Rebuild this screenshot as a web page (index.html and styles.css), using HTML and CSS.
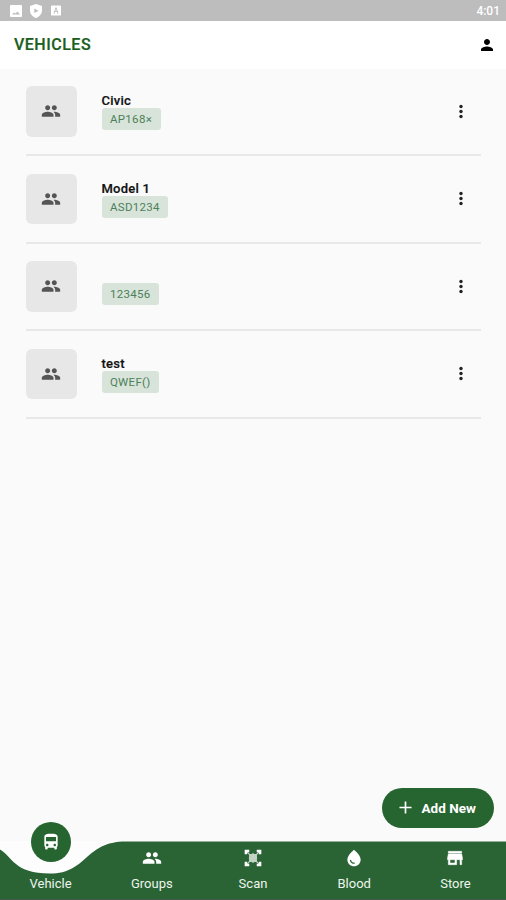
FILE: index.html
```html
<!DOCTYPE html>
<html lang="en">

<head>
    <meta charset="UTF-8">
    <meta name="viewport" content="width=device-width, initial-scale=1.0">
    <title>Vehicles</title>

    <link rel="stylesheet" href="styles.css">
</head>

<body>
    <!-- Shared icons -->
    <svg class="sprite">
        <symbol id="people" viewBox="0 0 24 24">
            <path d="M16 11c1.66 0 2.99-1.34 2.99-3S17.66 5 16 5s-3 1.34-3 3 1.34 3 3 3zm-8 0c1.66 0 2.99-1.34 2.99-3S9.66 5 8 5 5 6.34 5 8s1.34 3 3 3zm0 2c-2.33 0-7 1.17-7 3.5V19h14v-2.5c0-2.33-4.67-3.5-7-3.5zm8 0c-.29 0-.62.02-.97.05 1.16.84 1.97 1.97 1.97 3.45V19h6v-2.5c0-2.33-4.67-3.5-7-3.5z" />
        </symbol>
        <symbol id="more" viewBox="0 0 6 16">
            <circle cx="3" cy="2.5" r="1.700" />
            <circle cx="3" cy="7.5" r="1.700" />
            <circle cx="3" cy="12.5" r="1.700" />
        </symbol>
    </svg>

    <div class="status-bar">
        <svg class="status-icon" viewBox="0 0 12 12">
            <path fill-rule="evenodd" d="M1 0h10a1 1 0 0 1 1 1v10a1 1 0 0 1-1 1H1a1 1 0 0 1-1-1V1a1 1 0 0 1 1-1zM2 9.500h8L7.500 6.500 5.500 8.500 4 7.500z" />
        </svg>
        <svg class="status-icon shield" viewBox="0 0 12 14">
            <path fill-rule="evenodd" d="M6 0l6 2v4.500c0 3.500-2.500 6-6 7.500-3.500-1.500-6-4-6-7.500V2zM4.300 4.500v4.500L8.500 6.700z" />
        </svg>
        <svg class="status-icon small" viewBox="0 0 12 12">
            <path fill-rule="evenodd" d="M1 0h10a1 1 0 0 1 1 1v10a1 1 0 0 1-1 1H1a1 1 0 0 1-1-1V1a1 1 0 0 1 1-1zM5.400 2.500L3 9.500h1.200l.5-1.700h2.600l.5 1.700H9L6.600 2.500zM6 4l.9 2.800H5.100z" />
        </svg>
        <span class="time">4:01</span>
    </div>

    <header>
        <h1>VEHICLES</h1>
        <svg class="profile" viewBox="4 4 16 16">
            <path d="M12 12c2.210 0 4-1.790 4-4s-1.790-4-4-4-4 1.790-4 4 1.790 4 4 4zm0 2c-2.670 0-8 1.340-8 4v2h16v-2c0-2.660-5.330-4-8-4z" />
        </svg>
    </header>

    <!-- Vehicle list -->
    <main>
        <div class="vehicle">
            <div class="thumb"><svg><use href="#people" /></svg></div>
            <div class="info">
                <span class="name">Civic</span>
                <span class="plate">AP168×</span>
            </div>
            <svg class="more"><use href="#more" /></svg>
        </div>
        <div class="vehicle">
            <div class="thumb"><svg><use href="#people" /></svg></div>
            <div class="info">
                <span class="name">Model 1</span>
                <span class="plate">ASD1234</span>
            </div>
            <svg class="more"><use href="#more" /></svg>
        </div>
        <div class="vehicle">
            <div class="thumb"><svg><use href="#people" /></svg></div>
            <div class="info">
                <span class="name"></span>
                <span class="plate">123456</span>
            </div>
            <svg class="more"><use href="#more" /></svg>
        </div>
        <div class="vehicle">
            <div class="thumb"><svg><use href="#people" /></svg></div>
            <div class="info">
                <span class="name">test</span>
                <span class="plate">QWEF()</span>
            </div>
            <svg class="more"><use href="#more" /></svg>
        </div>
    </main>

    <button class="add-new">
        <svg viewBox="0 0 14 14"><path d="M6.100 0.500h1.800v5.600h5.600v1.800H7.900v5.600H6.100V7.900H0.500V6.100h5.600z" /></svg>
        Add New
    </button>

    <!-- Bottom navigation -->
    <nav>
        <svg class="nav-shape" viewBox="0 0 506 59">
            <path class="notch" d="M0 0h126v40H0z" />
            <path class="bar" d="M0 8.500C13 16 14 32.500 50 32.500C88 32.500 84 0.500 126 0.500H506V59H0z" />
            <path class="edge" d="M0 58.500H506" />
        </svg>
        <a class="tab active">
            <span class="bubble">
                <svg viewBox="0 0 24 24"><path d="M4 16c0 .88.39 1.670 1 2.220V20c0 .55.45 1 1 1h1c.55 0 1-.45 1-1v-1h8v1c0 .55.45 1 1 1h1c.55 0 1-.45 1-1v-1.780c.61-.55 1-1.340 1-2.220V6c0-3.500-3.580-4-8-4s-8 .5-8 4v10zm3.500 1c-.83 0-1.500-.67-1.500-1.500S6.670 14 7.500 14s1.500.67 1.500 1.500S8.330 17 7.500 17zm9 0c-.83 0-1.500-.67-1.500-1.500s.67-1.500 1.500-1.500 1.500.67 1.500 1.500-.67 1.500-1.500 1.500zm1.500-6H6V6h12v5z" /></svg>
            </span>
            <span>Vehicle</span>
        </a>
        <a class="tab">
            <svg><use href="#people" /></svg>
            <span>Groups</span>
        </a>
        <a class="tab">
            <svg class="scan" viewBox="0 0 24 24">
                <path class="code" d="M5 5l14 14M19 5L5 19M8 8h3v3H8zM13.500 8H16v3h-2.500zM8 13.500h3V16H8zM13 13h3v3h-3zM12 6v12M7 12h10" />
                <path class="corners" d="M3.500 7.500v-4h4M16.500 3.500h4v4M20.500 16.500v4h-4M7.500 20.500h-4v-4" />
            </svg>
            <span>Scan</span>
        </a>
        <a class="tab">
            <svg viewBox="0 0 24 24"><path d="M12 2c-5.330 4.550-8 8.480-8 11.800 0 4.980 3.800 8.200 8 8.200s8-3.220 8-8.200c0-3.320-2.670-7.250-8-11.800zM7.830 14c.37 0 .67.26.74.62.41 2.220 2.280 2.980 3.640 2.870.43-.02.79.32.79.75 0 .4-.32.73-.72.75-2.130.13-4.620-1.090-5.190-4.120-.08-.45.28-.87.74-.87z" /></svg>
            <span>Blood</span>
        </a>
        <a class="tab">
            <svg class="store" viewBox="0 0 24 24"><path d="M20 4H4v2h16V4zm1 10v-2l-1-5H4l-1 5v2h1v6h10v-6h4v6h2v-6h1zm-9 4H6v-4h6v4z" /></svg>
            <span>Store</span>
        </a>
    </nav>
</body>

</html>
```
FILE: styles.css
```css
* {
    box-sizing: border-box;
}

body {
    display: flex;
    flex-direction: column;
    height: 900px;
    margin: 0;
    overflow: hidden;
    background-color: #fafafa;
    font-family: Roboto, "Liberation Sans", sans-serif;
}

svg {
    display: block;
    fill: currentColor;
}

.sprite {
    display: none;
}

/* Status bar */
.status-bar {
    display: flex;
    align-items: center;
    height: 20.5px;
    padding: 1px 6px 0 10px;
    background-color: #bdbdbd;
    color: white;
}

.status-icon {
    width: 12px;
    height: 12px;
    margin-right: 8px;
}

.shield {
    height: 14px;
    margin-right: 9px;
}

.small {
    width: 10px;
    height: 11px;
}

.time {
    margin-left: auto;
    font-size: 12px;
    font-weight: 500;
}

header {
    display: flex;
    align-items: center;
    justify-content: space-between;
    height: 48px;
    padding: 0 13px 0 14px;
    background-color: white;
}

h1 {
    margin: 0;
    font-size: 16px;
    font-weight: 500;
    letter-spacing: 0.5px;
    color: #1b5e20;
    -webkit-text-stroke: 0.2px #1b5e20;
}

.profile {
    width: 12px;
    height: 12px;
}

/* Vehicle list */
main {
    flex: 1;
    padding: 0 25px 0 26px;
}

.vehicle {
    display: flex;
    height: 87.6px;
    padding-top: 17.5px;
    border-bottom: 2px solid #e8e8e8;
}

.thumb {
    display: flex;
    align-items: center;
    justify-content: center;
    width: 50.5px;
    height: 50.5px;
    border-radius: 6px;
    background-color: #e7e7e7;
    color: #555;
}

.thumb svg {
    width: 20px;
    height: 20px;
}

.info {
    display: flex;
    flex-direction: column;
    align-items: flex-start;
    margin-left: 25px;
    padding-top: 7px;
}

.name {
    height: 15px;
    font-size: 13px;
    line-height: 15px;
    font-weight: 500;
    letter-spacing: 0.25px;
    color: #111;
    -webkit-text-stroke: 0.2px #111;
}

.plate {
    height: 22px;
    padding: 0 8.5px;
    border-radius: 3px;
    background-color: #d8e4da;
    font-size: 11.5px;
    line-height: 23px;
    letter-spacing: 0.3px;
    color: #4c8059;
}

.more {
    width: 6px;
    height: 16px;
    margin: 17.5px 17px 0 auto;
    color: #222;
}

/* Add button */
.add-new {
    display: flex;
    align-items: center;
    align-self: flex-end;
    gap: 10px;
    width: 112px;
    height: 40px;
    margin: 0 12.5px 13.5px 0;
    padding: 0 0 0 17px;
    border: none;
    border-radius: 20px;
    background-color: #276530;
    font: bold 13.5px Roboto, "Liberation Sans", sans-serif;
    color: white;
}

.add-new svg {
    width: 13px;
    height: 13px;
}

/* Bottom navigation */
nav {
    position: relative;
    display: flex;
    height: 59px;
    color: white;
}

.nav-shape {
    position: absolute;
    top: 0;
    left: 0;
    width: 506px;
    height: 59px;
}

.notch {
    fill: #fdfdfd;
}

.bar {
    fill: #2a6434;
}

.edge {
    stroke: #46594a;
}

.tab {
    position: relative;
    display: flex;
    flex: 1;
    flex-direction: column;
    align-items: center;
    padding-top: 7px;
    font-size: 13px;
    line-height: 15px;
    color: #eef4ee;
}

.tab svg {
    width: 20px;
    height: 20px;
    margin-bottom: 8px;
    color: white;
}

.tab.active {
    padding-top: 0;
}

.bubble {
    display: flex;
    align-items: center;
    justify-content: center;
    width: 40px;
    height: 40px;
    margin: -19px 0 14px;
    border-radius: 50%;
    background-color: #276530;
}

.tab .bubble svg {
    margin: 0;
}

.store path {
    stroke: white;
    stroke-width: 0.6;
}

.scan path {
    fill: none;
    stroke: white;
}

.scan .corners {
    stroke-width: 3;
}

.scan .code {
    stroke: #c3d3c5;
    stroke-width: 1.5;
}
```
